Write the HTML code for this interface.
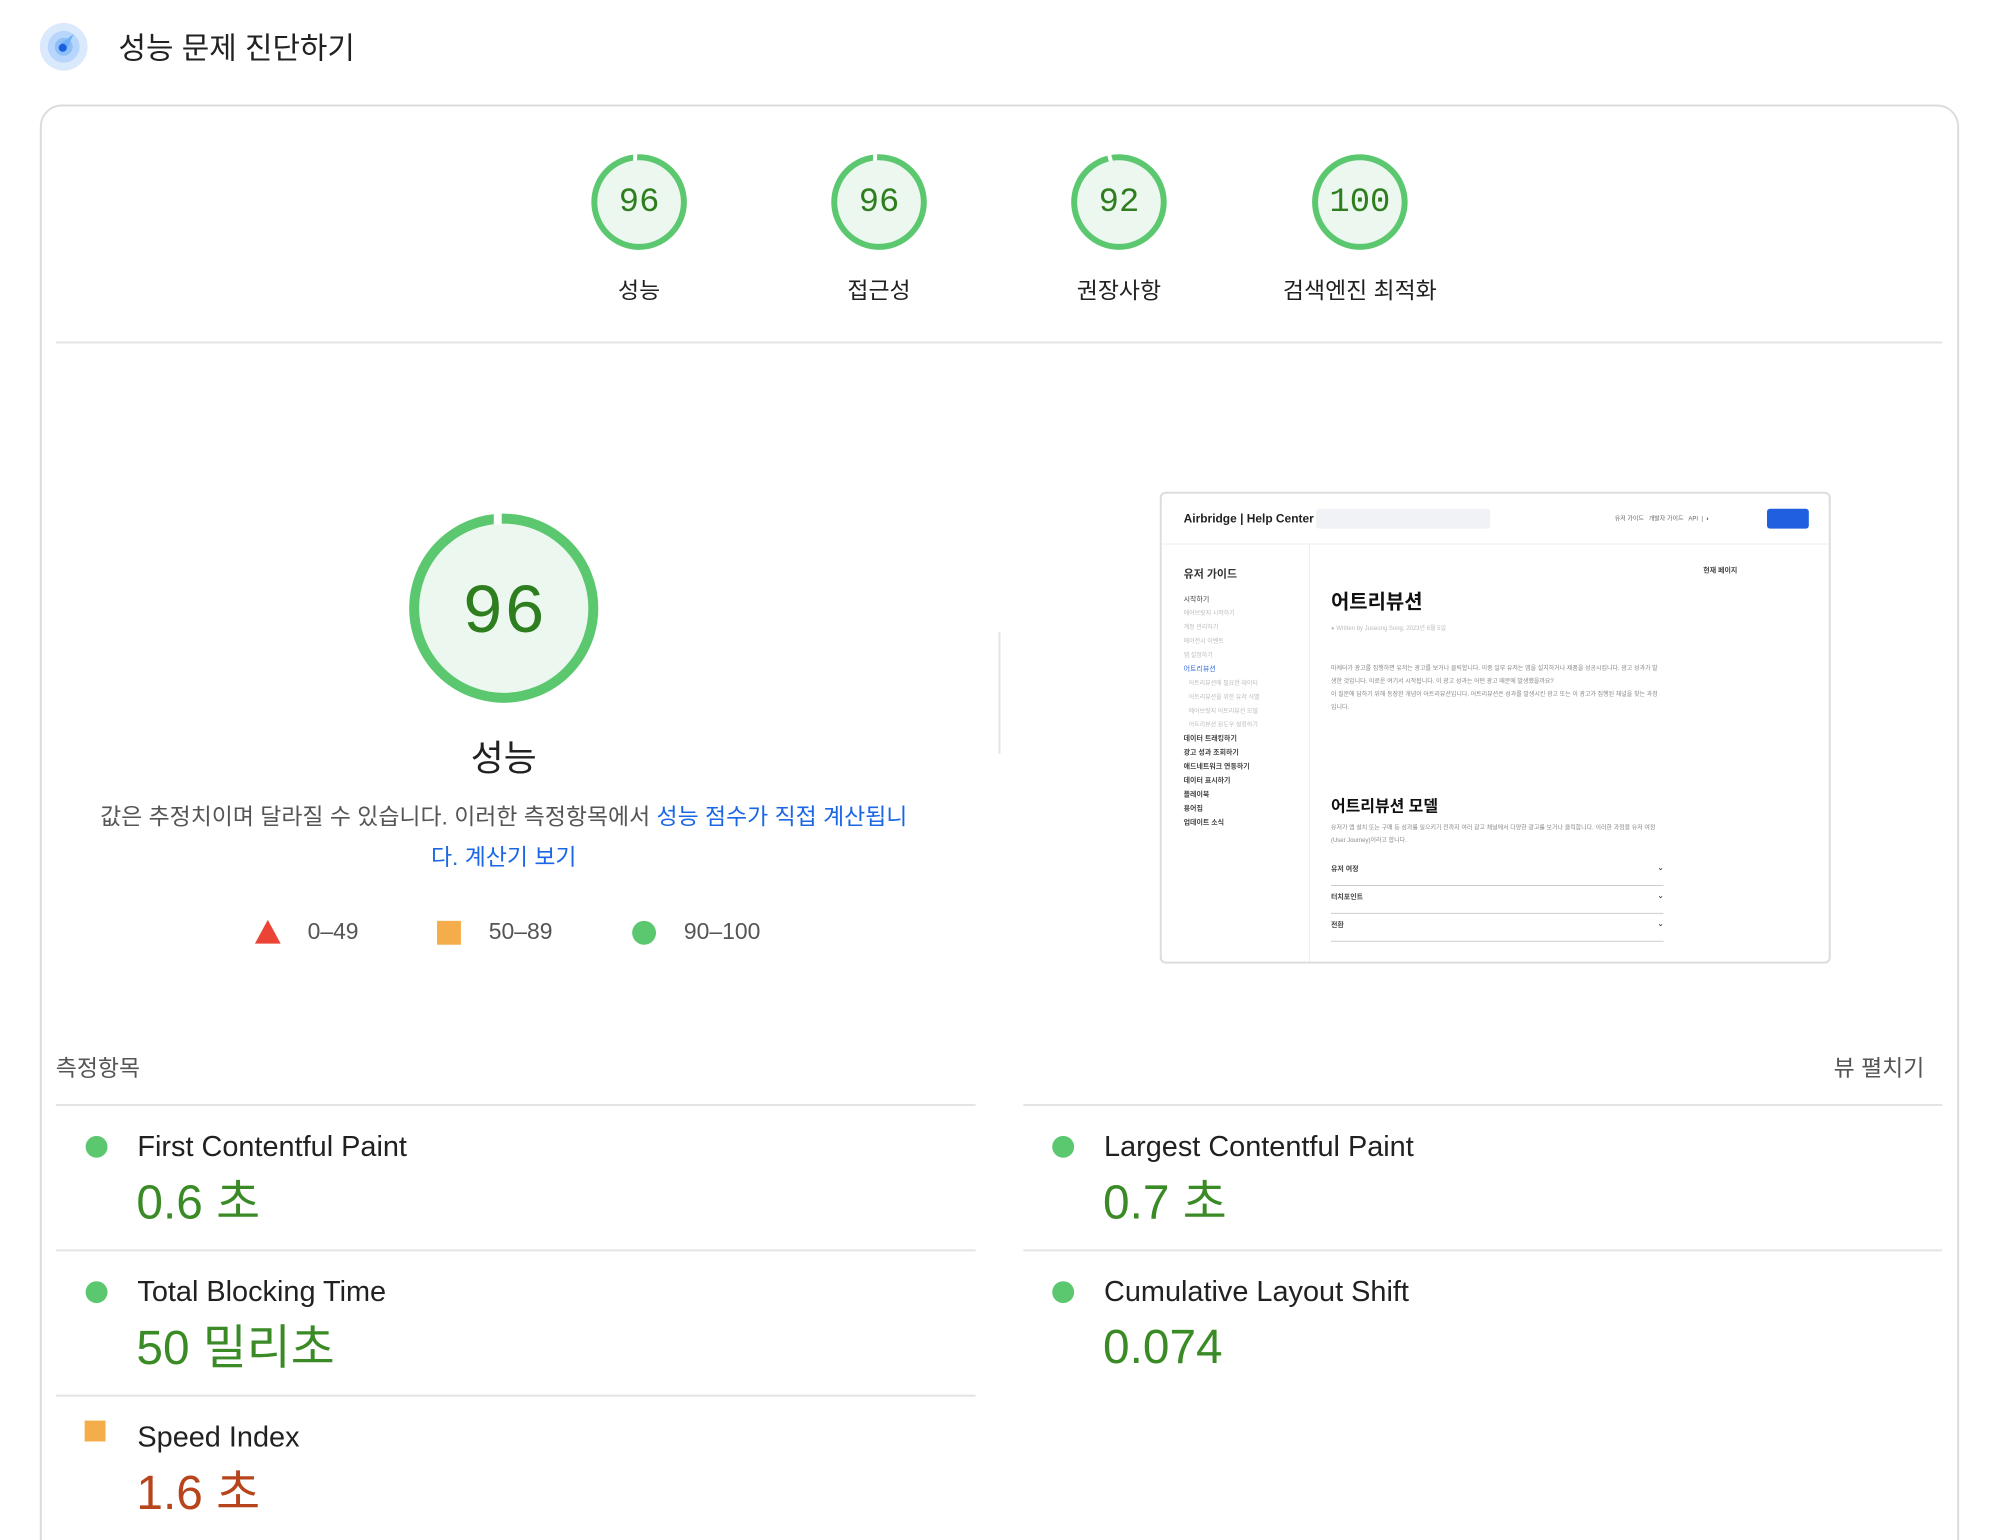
<!DOCTYPE html>
<html style="width:2002px;height:1540px;overflow:hidden"><head><meta charset="utf-8"><style>
*{margin:0;padding:0;box-sizing:border-box}
body{width:2002px;height:1540px;overflow:hidden;background:#fff;font-family:"Liberation Sans","Noto Sans CJK KR",sans-serif;color:#212121}
#w{position:relative;width:2002px;height:1540px;overflow:hidden}
#s{position:absolute;left:0;top:0;width:2002px;height:1560px;transform:scale(0.9955);transform-origin:0 0}
.a{position:absolute;white-space:nowrap}
.card{position:absolute;left:40px;top:105px;width:1928px;height:1600px;border:2px solid #dcdcdc;border-radius:22px}
.gnum{font-family:"Liberation Mono","DejaVu Sans Mono",monospace;color:#2e7d1e;text-align:center}
.hr{position:absolute;height:2px;background:#e4e4e4}
.dot{position:absolute;width:22px;height:22px;border-radius:50%;background:#5bc870}
.mt{position:absolute;font-size:29px;color:#212121}
.mv{position:absolute;font-size:48px;color:#3a8a25}
.t{font-size:6px;color:#bbb}
</style></head><body><div id="w"><div id="s">
<svg class="a" style="left:39px;top:22px" width="50" height="50"><circle cx="25" cy="25" r="24" fill="#dbe9fd"/><circle cx="25" cy="25" r="16" fill="#b8d5fb"/><circle cx="25" cy="25" r="9" fill="#8ec0f7"/><path d="M22 22 L35 12 L28 28 Z" fill="#6fb2f5"/><circle cx="24" cy="26" r="4" fill="#1a5ee0"/></svg>
<div class="a" style="left:119px;top:24px;font-size:30px;color:#212121">성능 문제 진단하기</div>
<div class="card"></div>

<svg class="a" style="left:0;top:0" width="2002" height="360">
<g fill="#ecf8ef" stroke="#5bc870" stroke-width="6">
<circle cx="642" cy="203" r="45"/><circle cx="883" cy="203" r="45"/><circle cx="1124" cy="203" r="45"/><circle cx="1366" cy="203" r="45"/>
</g>
<g stroke="#fff" stroke-width="4"><line x1="638" y1="155" x2="638" y2="162"/><line x1="879" y1="155" x2="879" y2="162"/><line x1="1114" y1="155" x2="1116" y2="162"/></g>
</svg>
<div class="a gnum" style="left:592px;top:185px;width:100px;font-size:34px">96</div>
<div class="a gnum" style="left:833px;top:185px;width:100px;font-size:34px">96</div>
<div class="a gnum" style="left:1074px;top:185px;width:100px;font-size:34px">92</div>
<div class="a gnum" style="left:1316px;top:185px;width:100px;font-size:34px">100</div>
<div class="a" style="left:542px;top:273px;width:200px;text-align:center;font-size:23px">성능</div>
<div class="a" style="left:783px;top:273px;width:200px;text-align:center;font-size:23px">접근성</div>
<div class="a" style="left:1024px;top:273px;width:200px;text-align:center;font-size:23px">권장사항</div>
<div class="a" style="left:1216px;top:273px;width:300px;text-align:center;font-size:23px">검색엔진 최적화</div>
<div class="hr" style="left:56px;top:343px;width:1895px"></div>

<svg class="a" style="left:400px;top:505px" width="212" height="212">
<circle cx="106" cy="106" r="90" fill="#ecf8ef" stroke="#5bc870" stroke-width="10"/>
<line x1="100" y1="10" x2="100" y2="22" stroke="#fff" stroke-width="8"/>
</svg>
<div class="a gnum" style="left:406px;top:578px;width:200px;font-size:70px">96</div>
<div class="a" style="left:406px;top:733px;width:200px;text-align:center;font-size:36px">성능</div>
<div class="a" style="left:60px;top:800px;width:892px;text-align:center;font-size:23px;color:#555;white-space:normal;line-height:41px">값은 추정치이며 달라질 수 있습니다. 이러한 측정항목에서 <span style="color:#1a66e6">성능 점수가 직접 계산됩니<br>다. 계산기 보기</span></div>
<svg class="a" style="left:256px;top:924px" width="26" height="24"><polygon points="13,0 26,24 0,24" fill="#eb4335"/></svg>
<div class="a" style="left:309px;top:922px;font-size:23px;color:#555">0–49</div>
<div class="a" style="left:439px;top:925px;width:24px;height:24px;background:#f4ad4a"></div>
<div class="a" style="left:491px;top:922px;font-size:23px;color:#555">50–89</div>
<div class="a" style="left:635px;top:925px;width:24px;height:24px;border-radius:50%;background:#5bc870"></div>
<div class="a" style="left:687px;top:922px;font-size:23px;color:#555">90–100</div>

<div class="a" style="left:1003px;top:635px;width:2px;height:122px;background:#e4e4e4"></div>

<div class="a" style="left:1165px;top:494px;width:674px;height:474px;border:2px solid #ddd;border-radius:6px;overflow:hidden;background:#fff">
 <div class="a" style="left:22px;top:18px;font-size:12px;font-weight:bold;color:#222">Airbridge | Help Center</div>
 <div class="a" style="left:155px;top:15px;width:175px;height:20px;background:#f0f2f5;border-radius:3px"></div>
 <div class="a t" style="left:455px;top:20px;color:#666">유저 가이드 &nbsp; 개발자 가이드 &nbsp; API &nbsp;|&nbsp; ◐</div>
 <div class="a" style="left:608px;top:15px;width:42px;height:20px;background:#1f5fe0;border-radius:3px"></div>
 <div class="a" style="left:0;top:50px;width:674px;height:1px;background:#eee"></div>
 <div class="a" style="left:148px;top:50px;width:1px;height:424px;background:#eee"></div>
 <div class="a" style="left:22px;top:72px;font-size:11px;font-weight:bold;color:#333">유저 가이드</div>
 <div class="a" style="left:22px;top:100px;font-size:7px;color:#444;line-height:14px;white-space:normal;width:110px">시작하기<br><span class="t">에어브릿지 시작하기<br>계정 관리하기<br>에이전시 이벤트<br>앱 설정하기</span><br><span style="color:#3a6fe0">어트리뷰션</span><br><span class="t">&nbsp;&nbsp;&nbsp;어트리뷰션에 필요한 데이터<br>&nbsp;&nbsp;&nbsp;어트리뷰션을 위한 유저 식별<br>&nbsp;&nbsp;&nbsp;에어브릿지 어트리뷰션 모델<br>&nbsp;&nbsp;&nbsp;어트리뷰션 윈도우 설정하기</span><br><b>데이터 트래킹하기<br>광고 성과 조회하기<br>애드네트워크 연동하기<br>데이터 표시하기<br>플레이북<br>용어집<br>업데이트 소식</b></div>
 <div class="a" style="left:170px;top:92px;font-size:20px;font-weight:bold;color:#111">어트리뷰션</div>
 <div class="a t" style="left:170px;top:130px">● Written by Juseong Song, 2023년 6월 5일</div>
 <div class="a" style="left:170px;top:170px;width:330px;white-space:normal;font-size:6px;line-height:13px;color:#888">마케터가 광고를 집행하면 유저는 광고를 보거나 클릭합니다. 이중 일부 유저는 앱을 설치하거나 제품을 성공시킵니다. 광고 성과가 발생한 것입니다. 이로운 여기서 시작됩니다. 이 광고 성과는 어떤 광고 때문에 발생했을까요?<br>이 질문에 답하기 위해 등장한 개념이 어트리뷰션입니다. 어트리뷰션은 성과를 발생시킨 광고 또는 이 광고가 집행된 채널을 찾는 과정입니다.</div>
 <div class="a" style="left:170px;top:300px;font-size:16px;font-weight:bold;color:#111">어트리뷰션 모델</div>
 <div class="a" style="left:170px;top:330px;width:330px;white-space:normal;font-size:6px;line-height:13px;color:#888">유저가 앱 설치 또는 구매 등 성과를 일으키기 전까지 여러 광고 채널에서 다양한 광고를 보거나 클릭합니다. 이러한 과정을 유저 여정(User Journey)이라고 합니다.</div>
 <div class="a" style="left:170px;top:372px;width:334px;height:22px;border-bottom:1px solid #ccc;font-size:7px;font-weight:bold;color:#444">유저 여정<span style="float:right">⌄</span></div>
 <div class="a" style="left:170px;top:400px;width:334px;height:22px;border-bottom:1px solid #ccc;font-size:7px;font-weight:bold;color:#444">터치포인트<span style="float:right">⌄</span></div>
 <div class="a" style="left:170px;top:428px;width:334px;height:22px;border-bottom:1px solid #ccc;font-size:7px;font-weight:bold;color:#444">전환<span style="float:right">⌄</span></div>
 <div class="a" style="left:544px;top:72px;font-size:7px;font-weight:bold;color:#444">현재 페이지</div>
</div>

<div class="a" style="left:56px;top:1054px;font-size:23px;color:#555">측정항목</div>
<div class="a" style="left:1833px;top:1054px;width:100px;text-align:right;font-size:23px;color:#555">뷰 펼치기</div>

<div class="hr" style="left:56px;top:1109px;width:924px"></div>
<div class="hr" style="left:56px;top:1255px;width:924px"></div>
<div class="hr" style="left:56px;top:1401px;width:924px"></div>
<div class="hr" style="left:1028px;top:1109px;width:923px"></div>
<div class="hr" style="left:1028px;top:1255px;width:923px"></div>

<div class="dot" style="left:86px;top:1141px"></div>
<div class="mt" style="left:138px;top:1136px">First Contentful Paint</div>
<div class="mv" style="left:137px;top:1168px">0.6 초</div>
<div class="dot" style="left:86px;top:1287px"></div>
<div class="mt" style="left:138px;top:1282px">Total Blocking Time</div>
<div class="mv" style="left:137px;top:1314px">50 밀리초</div>
<div class="a" style="left:85px;top:1427px;width:21px;height:21px;background:#f4ad4a"></div>
<div class="mt" style="left:138px;top:1428px">Speed Index</div>
<div class="mv" style="left:137px;top:1460px;color:#b8441c">1.6 초</div>

<div class="dot" style="left:1057px;top:1141px"></div>
<div class="mt" style="left:1109px;top:1136px">Largest Contentful Paint</div>
<div class="mv" style="left:1108px;top:1168px">0.7 초</div>
<div class="dot" style="left:1057px;top:1287px"></div>
<div class="mt" style="left:1109px;top:1282px">Cumulative Layout Shift</div>
<div class="mv" style="left:1108px;top:1326px">0.074</div>
</div></div></body></html>
